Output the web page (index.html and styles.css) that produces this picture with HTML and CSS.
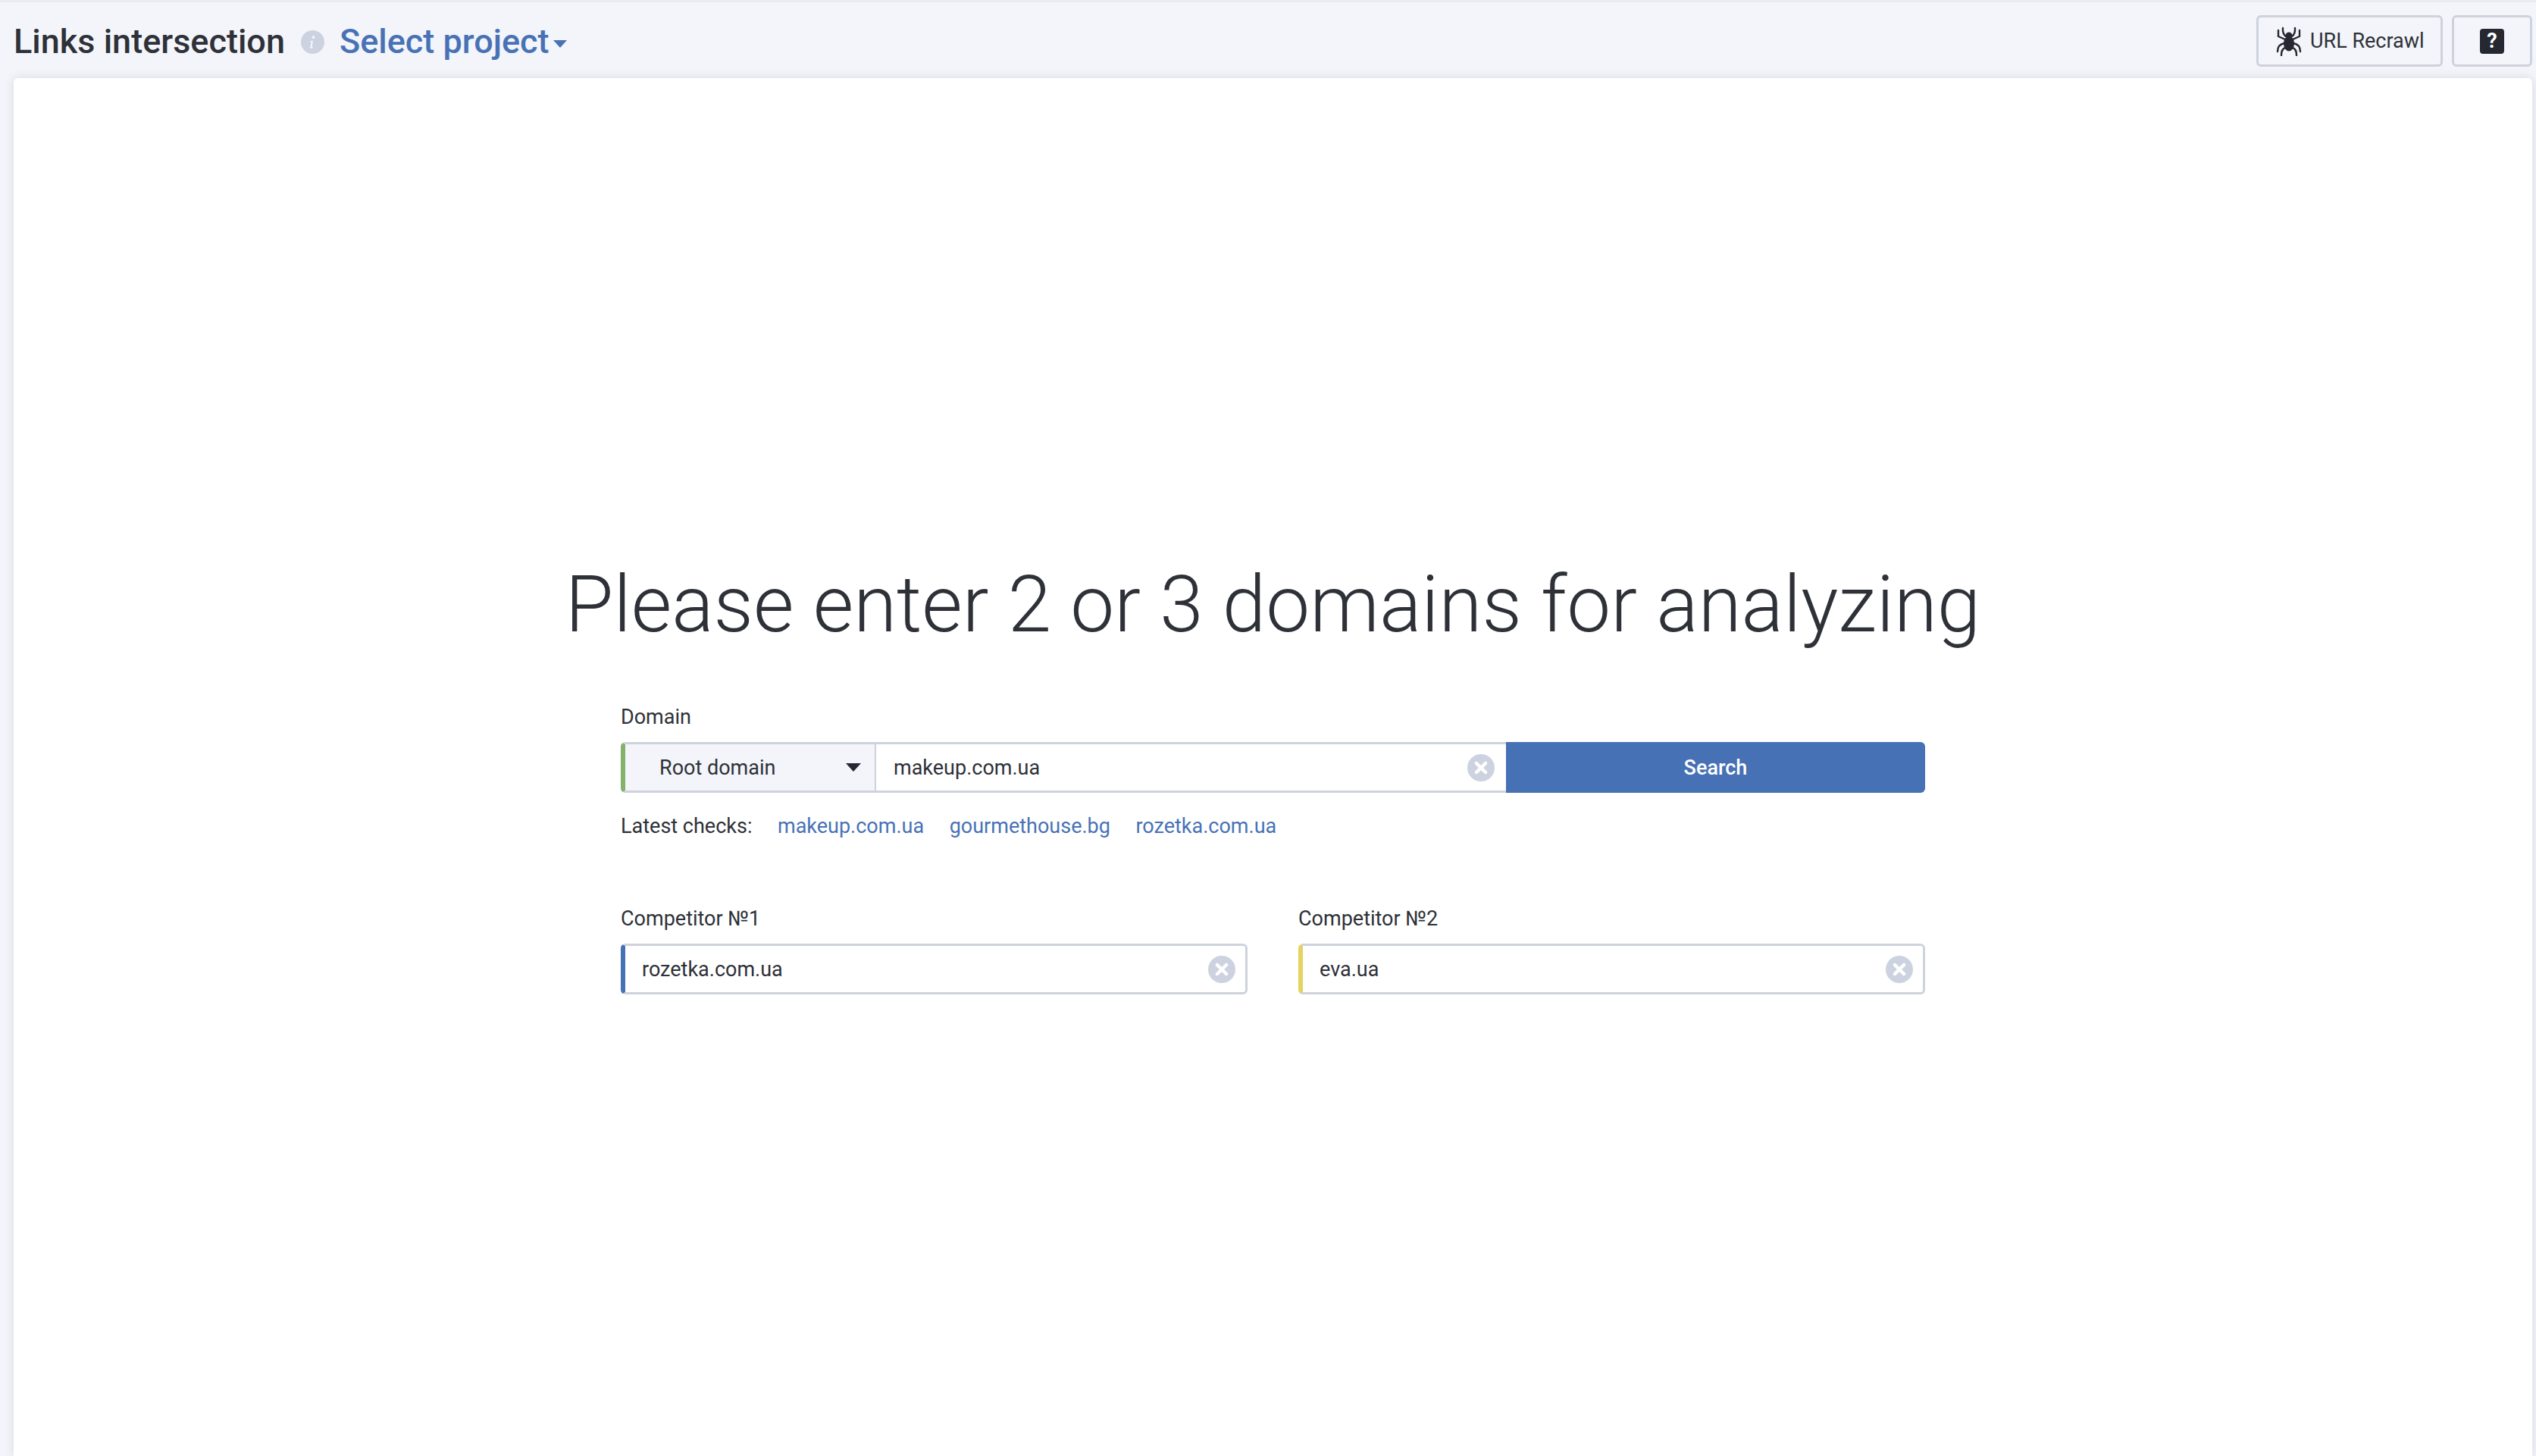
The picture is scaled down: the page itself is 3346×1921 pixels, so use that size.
FILE: index.html
```html
<!DOCTYPE html>
<html lang="en">
<head>
<meta charset="utf-8">
<title>Links intersection</title>
<link rel="stylesheet" href="styles.css">
</head>
<body>
<div class="page">
  <header class="topbar">
    <div class="topbar-left">
      <h1 class="title">Links intersection</h1>
      <svg class="info-icon" viewBox="0 0 31 31" aria-hidden="true"><circle cx="15.500" cy="15.500" r="15.500" fill="#ccd2df"/><path d="M16 13.500l-3.500.6-.2 1 1.300.3-1.300 6.500c-.3 1.500.4 2 1.500 2 1 0 2-.5 2.700-1.200l.2-.9c-.5.400-1.200.6-1.500.6-.5 0-.6-.3-.5-.9zM16.500 7.300a1.900 1.900 0 1 0 0 3.800 1.900 1.900 0 0 0 0-3.800z" fill="#f3f5fa"/></svg>
      <a class="project" href="#">Select project<span class="project-caret"></span></a>
    </div>
    <div class="topbar-right">
      <button class="tool-btn recrawl" type="button">
        <svg class="bug-icon" viewBox="0 0 35 39" aria-hidden="true">
          <g fill="none" stroke="#252831" stroke-width="2.400" stroke-linecap="round" stroke-linejoin="round">
            <path d="M13 13 C10 11 8.500 8 9 2"/><path d="M21 13 C24 11 25.500 8 25 2"/>
            <path d="M12 17 L3 13 V5"/><path d="M22 17 L31 13 V5"/>
            <path d="M11 22 C6 23 2 26 2 33"/><path d="M23 22 C28 23 32 26 32 33"/>
            <path d="M12 28 C9 29 7 32 7 38"/><path d="M22 28 C25 29 27 32 27 38"/>
          </g>
          <ellipse cx="17" cy="22.500" rx="7" ry="10" fill="#252831"/>
          <circle cx="17" cy="12" r="4.500" fill="#252831"/>
        </svg>
        <span>URL Recrawl</span>
      </button>
      <button class="tool-btn help" type="button"><span class="help-mark">?</span></button>
    </div>
  </header>

  <main class="panel">
    <h2 class="headline">Please enter 2 or 3 domains for analyzing</h2>
    <form class="form">
      <label class="field-label">Domain</label>
      <div class="domain-row">
        <div class="scope-select"><span>Root domain</span><i class="select-caret"></i></div>
        <div class="domain-input">
          <span>makeup.com.ua</span>
          <svg class="clear-icon" viewBox="0 0 36 36" aria-hidden="true"><circle cx="18" cy="18" r="18" fill="#ccd2df"/><path d="M12 12l12 12M24 12L12 24" stroke="#fff" stroke-width="4.500" stroke-linecap="round"/></svg>
        </div>
        <button class="search-btn" type="button">Search</button>
      </div>
      <div class="latest">
        <span class="latest-label">Latest checks:</span>
        <a href="#">makeup.com.ua</a>
        <a href="#">gourmethouse.bg</a>
        <a href="#">rozetka.com.ua</a>
      </div>
      <div class="competitors">
        <div class="competitor">
          <label class="field-label">Competitor №1</label>
          <div class="comp-input comp-blue">
            <span>rozetka.com.ua</span>
            <svg class="clear-icon" viewBox="0 0 36 36" aria-hidden="true"><circle cx="18" cy="18" r="18" fill="#ccd2df"/><path d="M12 12l12 12M24 12L12 24" stroke="#fff" stroke-width="4.500" stroke-linecap="round"/></svg>
          </div>
        </div>
        <div class="competitor">
          <label class="field-label">Competitor №2</label>
          <div class="comp-input comp-yellow">
            <span>eva.ua</span>
            <svg class="clear-icon" viewBox="0 0 36 36" aria-hidden="true"><circle cx="18" cy="18" r="18" fill="#ccd2df"/><path d="M12 12l12 12M24 12L12 24" stroke="#fff" stroke-width="4.500" stroke-linecap="round"/></svg>
          </div>
        </div>
      </div>
    </form>
  </main>
</div>
</body>
</html>
```

FILE: styles.css
```css
* { box-sizing: border-box; }
html, body { margin: 0; padding: 0; height: 100%; }
body {
  background: #f3f5fa;
  color: #2e3138;
  font-family: Roboto, "Liberation Sans", sans-serif;
  overflow: hidden;
}
a { color: #4872b5; text-decoration: none; }
.page {
  display: flex;
  flex-direction: column;
  height: 1921px;
  border-top: 3px solid #e9ebf0;
}
.topbar {
  height: 100px;
  flex: none;
  display: flex;
  justify-content: space-between;
  padding: 17px 5px 0 18px;
}
.topbar-left { display: flex; align-items: center; height: 70px; }
.title { margin: 0; font-size: 45px; font-weight: 500; line-height: 70px; }
.info-icon { width: 31px; height: 31px; margin-left: 21px; flex: none; }
.project {
  display: flex;
  align-items: center;
  margin-left: 20px;
  font-size: 45px;
  font-weight: 500;
  line-height: 70px;
}
.project-caret {
  width: 0;
  height: 0;
  margin: 6px 0 0 5px;
  border-left: 9px solid transparent;
  border-right: 9px solid transparent;
  border-top: 10px solid #4872b5;
}
.topbar-right { display: flex; gap: 12px; }
.tool-btn {
  height: 68px;
  display: flex;
  align-items: center;
  background: transparent;
  border: 3px solid #ced2dc;
  border-radius: 6px;
  color: #2e3138;
  font-family: inherit;
  font-size: 27px;
  padding: 0;
}
.recrawl { width: 246px; padding-left: 23px; gap: 10px; }
.bug-icon { width: 35px; height: 39px; flex: none; }
.help { width: 106px; justify-content: center; }
.help-mark {
  width: 32px;
  height: 33px;
  border-radius: 4px;
  background: #252831;
  color: #fff;
  font-size: 27px;
  font-weight: 700;
  line-height: 33px;
  text-align: center;
}
.panel {
  flex: 1;
  margin: 0 5px 0 18px;
  background: #fff;
  border-radius: 6px 6px 0 0;
  box-shadow: 0 0 14px rgba(60, 70, 100, 0.16);
  padding-top: 630px;
}
.headline {
  margin: 0;
  font-size: 103.400px;
  font-weight: 300;
  line-height: 130px;
  text-align: center;
}
.form {
  width: 1721px;
  margin: 0 auto;
  padding-top: 66px;
}
.field-label {
  display: block;
  font-size: 27px;
  line-height: 34px;
}
.domain-row {
  display: flex;
  height: 67px;
  margin-top: 16px;
}
.scope-select {
  width: 337px;
  flex: none;
  display: flex;
  align-items: center;
  justify-content: space-between;
  padding: 0 18px 0 45px;
  background: #f3f5fa;
  border: 3px solid #ced2dc;
  border-left: 6px solid #84b26a;
  border-right: 2px solid #ced2dc;
  border-radius: 6px 0 0 6px;
  font-size: 27px;
}
.select-caret {
  width: 0;
  height: 0;
  border-left: 10px solid transparent;
  border-right: 10px solid transparent;
  border-top: 11px solid #252831;
}
.domain-input {
  flex: 1;
  display: flex;
  align-items: center;
  justify-content: space-between;
  padding: 0 15px 0 23px;
  border-top: 3px solid #ced2dc;
  border-bottom: 3px solid #ced2dc;
  font-size: 27px;
}
.clear-icon { width: 36px; height: 36px; flex: none; }
.search-btn {
  width: 553px;
  flex: none;
  border: 0;
  background: #4771b5;
  color: #fff;
  border-radius: 0 6px 6px 0;
  font-family: inherit;
  font-size: 27px;
  font-weight: 500;
}
.latest {
  display: flex;
  gap: 33.500px;
  margin-top: 27px;
  font-size: 27px;
  line-height: 34px;
}
.competitors {
  display: grid;
  grid-template-columns: 827px 827px;
  justify-content: space-between;
  margin-top: 88px;
}
.comp-input {
  display: flex;
  align-items: center;
  justify-content: space-between;
  height: 67px;
  margin-top: 16px;
  padding: 0 13px 0 22px;
  border: 3px solid #ced2dc;
  border-radius: 6px;
  font-size: 27px;
}
.comp-blue { border-left: 6px solid #4771b5; }
.comp-yellow { border-left: 6px solid #e3d35f; }
```
